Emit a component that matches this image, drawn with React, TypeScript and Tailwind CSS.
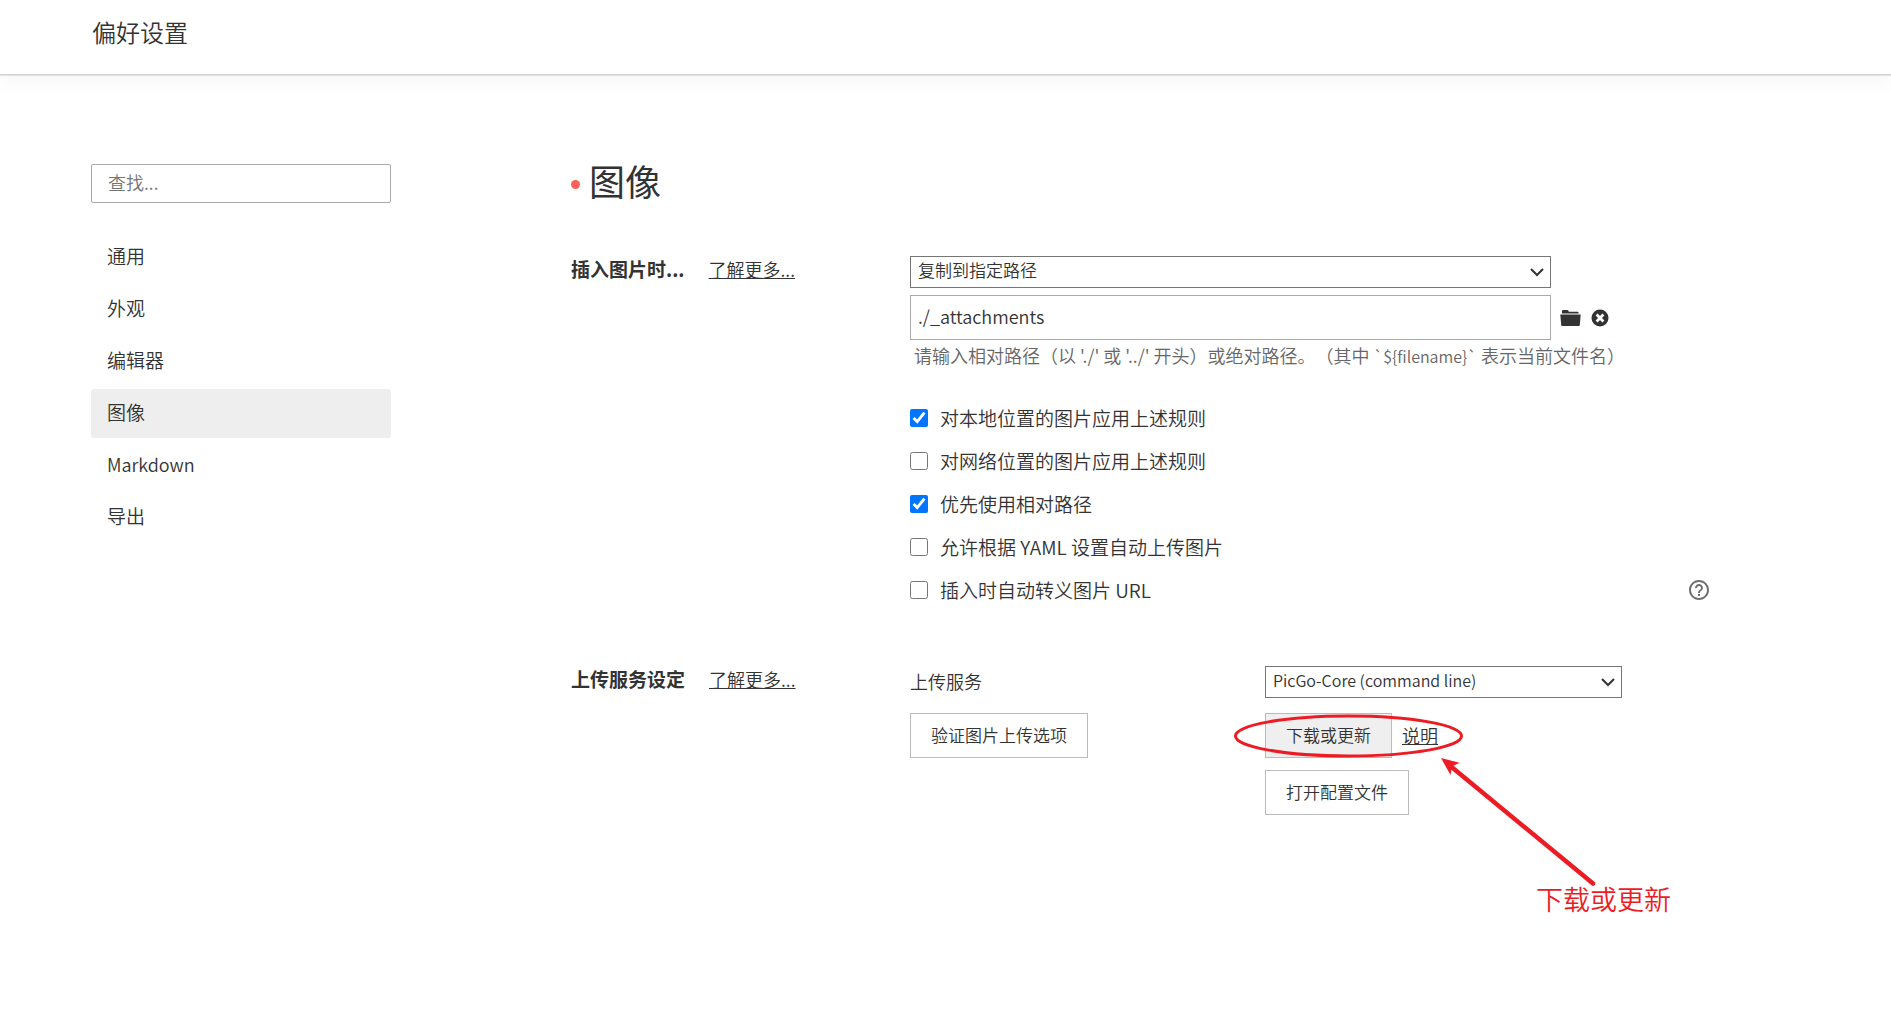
import React, { useState } from 'react';

const NAV_ITEMS = ['通用', '外观', '编辑器', '图像', 'Markdown', '导出'];

const RULES = [
    { id: 'apply-local', label: '对本地位置的图片应用上述规则', checked: true },
    { id: 'apply-online', label: '对网络位置的图片应用上述规则', checked: false },
    { id: 'prefer-relative', label: '优先使用相对路径', checked: true },
    { id: 'allow-yaml', label: '允许根据 YAML 设置自动上传图片', checked: false },
    { id: 'escape-url', label: '插入时自动转义图片 URL', checked: false, help: true },
];

const FolderIcon: React.FC = () => (
    <svg width="21" height="16" viewBox="0 0 21 16" fill="currentColor" aria-hidden="true">
        <path d="M2 3.6V1.2C2 .5 2.4 0 3.1 0h4.2c.6 0 .9.3 1.1.8l.4 1h8.6c.8 0 1.2.4 1.2 1.1v.7z" />
        <path d="M.3 4.6h20.4l-.9 10.5c0 .6-.4.9-.9.9H2.1c-.5 0-.9-.3-.9-.9z" />
    </svg>
);

const RemoveIcon: React.FC = () => (
    <svg width="18" height="18" viewBox="0 0 18 18" aria-hidden="true">
        <circle cx="9" cy="9" r="8.5" fill="currentColor" />
        <path d="M5.6 5.6l6.8 6.8M12.4 5.6l-6.8 6.8" stroke="#fff" strokeWidth="2.8" />
    </svg>
);

const HelpIcon: React.FC = () => (
    <svg width="24" height="24" viewBox="0 0 24 24" fill="currentColor" aria-hidden="true">
        <path d="M11 18h2v-2h-2v2zm1-16C6.48 2 2 6.48 2 12s4.48 10 10 10 10-4.48 10-10S17.52 2 12 2zm0 18c-4.41 0-8-3.59-8-8s3.59-8 8-8 8 3.59 8 8-3.59 8-8 8zm0-14c-2.21 0-4 1.79-4 4h2c0-1.1.9-2 2-2s2 .9 2 2c0 2-3 1.75-3 5h2c0-2.25 3-2.5 3-5 0-2.21-1.79-4-4-4z" />
    </svg>
);

// Drop-down arrow, laid over the right end of a select
const Chevron: React.FC = () => (
    <svg className="pointer-events-none absolute right-[7px] top-3" width="14" height="9" viewBox="0 0 14 9" fill="none" aria-hidden="true">
        <path d="M1 1l6 6 6-6" stroke="currentColor" strokeWidth="2" />
    </svg>
);

// Red ellipse, arrow and caption pointing at the download button
const Callout: React.FC = () => (
    <div className="pointer-events-none absolute -left-10 -top-2.5 h-[220px] w-[460px] text-[#ed1c24]">
        <svg width="460" height="220" viewBox="0 0 460 220" fill="none" aria-hidden="true">
            <ellipse cx="123.5" cy="33" rx="113" ry="20" stroke="currentColor" strokeWidth="3" />
            <path d="M226 63.500L368 180.500" stroke="currentColor" strokeWidth="4.500" strokeLinecap="round" />
            <path d="M216 55l18.500 4.800-7.500 3.700-1.500 8.500z" fill="currentColor" />
        </svg>
        <span className="absolute left-[311px] top-44 whitespace-nowrap text-[27px] leading-10">下载或更新</span>
    </div>
);

const SectionTitle: React.FC<{ title: string }> = ({ title }) => (
    <div className="flex items-baseline gap-6 leading-[26px]">
        <h2 className="text-[19px] font-bold">{title}</h2>
        <a href="#more" className="text-lg leading-[26px] underline">了解更多...</a>
    </div>
);

const App: React.FC = () => {
    const [active, setActive] = useState('图像');
    const [path, setPath] = useState('./_attachments');

    return (
        <div className="min-h-screen bg-white font-['Noto_Sans_CJK_SC',sans-serif] font-[350] text-[#333]">
            <header className="h-[75px] border-b border-[#d4d4d4] px-[92px] pt-3.5 shadow-[0_1px_0_#e2e2e2,0_2px_24px_rgba(0,0,0,0.06)]">
                <h1 className="text-2xl leading-9 font-[350]">偏好设置</h1>
            </header>

            <div className="flex items-start gap-[180px] pl-[91px] pr-[180px] pt-[89px]">
                <aside className="w-[300px] shrink-0">
                    <input
                        type="search"
                        aria-label="查找"
                        placeholder="查找..."
                        className="h-[39px] w-full rounded-xs border border-[#aaa] px-4 pb-1 text-lg placeholder:text-[#757575]"
                    />
                    <nav className="mt-[30px] flex flex-col gap-[3px]">
                        {NAV_ITEMS.map(item => (
                            <button
                                key={item}
                                type="button"
                                onClick={() => setActive(item)}
                                className={`h-[49px] rounded-[3px] px-4 pb-1 text-left leading-7 ${item === 'Markdown' ? 'text-lg' : 'text-[19px]'} ${active === item ? 'bg-[#eee]' : ''}`}
                            >
                                {item}
                            </button>
                        ))}
                    </nav>
                </aside>

                <main className="min-w-0 flex-1">
                    <div className="flex h-[31px] items-center gap-[9px]">
                        <span className="mt-2.5 size-[9px] rounded-full bg-[#ff5f56]" />
                        <h1 className="text-4xl leading-10 font-normal">图像</h1>
                    </div>

                    <section className="mt-[61px] grid grid-cols-[339px_1fr]">
                        <SectionTitle title="插入图片时..." />
                        <div>
                            <div className="relative w-[641px] max-w-full">
                                <select aria-label="插入图片时" className="block h-8 w-full appearance-none border border-[#767676] px-[7px] pb-1 text-[17px]">
                                    <option>复制到指定路径</option>
                                </select>
                                <Chevron />
                            </div>
                            <div className="mt-[7px] flex items-center">
                                <input
                                    type="text"
                                    aria-label="图片路径"
                                    value={path}
                                    onChange={e => setPath(e.target.value)}
                                    className="h-[45px] w-[641px] border border-[#aaa] px-[7px] pb-1 text-lg"
                                />
                                <button type="button" aria-label="打开文件夹" className="ml-[9px]">
                                    <FolderIcon />
                                </button>
                                <button type="button" aria-label="清除" className="ml-2.5">
                                    <RemoveIcon />
                                </button>
                            </div>
                            <p className="whitespace-nowrap pl-1 pt-px text-lg leading-7 text-[#666] [text-spacing-trim:space-all]">
                                请输入相对路径（以 './' 或 '../' 开头）或绝对路径。（其中 <code className="font-['Noto_Sans_CJK_SC',sans-serif] text-base">{'`${filename}`'}</code> 表示当前文件名）
                            </p>

                            <div className="mt-[27px] flex flex-col">
                                {RULES.map(rule => (
                                    <div key={rule.id} className="flex h-[43px] items-center">
                                        <input id={rule.id} type="checkbox" defaultChecked={rule.checked} className="size-[18px]" />
                                        <label htmlFor={rule.id} className="pl-3 text-[19px] leading-7">{rule.label}</label>
                                        {rule.help && (
                                            <button type="button" aria-label="帮助" className="ml-auto text-[#6f6f6f]">
                                                <HelpIcon />
                                            </button>
                                        )}
                                    </div>
                                ))}
                            </div>
                        </div>
                    </section>

                    <section className="mt-[55px] grid grid-cols-[339px_1fr]">
                        <SectionTitle title="上传服务设定" />
                        <div className="grid grid-cols-[355px_1fr] items-start gap-y-[15px]">
                            <label htmlFor="uploader" className="text-lg leading-[30px]">上传服务</label>
                            <div className="relative w-[357px]">
                                <select id="uploader" className="block h-8 w-full appearance-none border border-[#767676] px-[7px] pb-1 text-base">
                                    <option>PicGo-Core (command line)</option>
                                </select>
                                <Chevron />
                            </div>
                            <button type="button" className="h-[45px] justify-self-start border border-[#bbb] px-5 pb-0.5 text-[17px]">
                                验证图片上传选项
                            </button>
                            <div className="relative flex flex-col items-start gap-3">
                                <div className="flex items-center gap-2.5">
                                    <button type="button" className="h-[45px] border border-[#bbb] bg-[#efefef] px-5 pb-0.5 text-[17px]">
                                        下载或更新
                                    </button>
                                    <a href="#readme" className="pb-0.5 text-lg underline">说明</a>
                                </div>
                                <button type="button" className="h-[45px] border border-[#bbb] px-5 pb-0.5 text-[17px]">
                                    打开配置文件
                                </button>
                                <Callout />
                            </div>
                        </div>
                    </section>
                </main>
            </div>
        </div>
    );
};

export default App;
